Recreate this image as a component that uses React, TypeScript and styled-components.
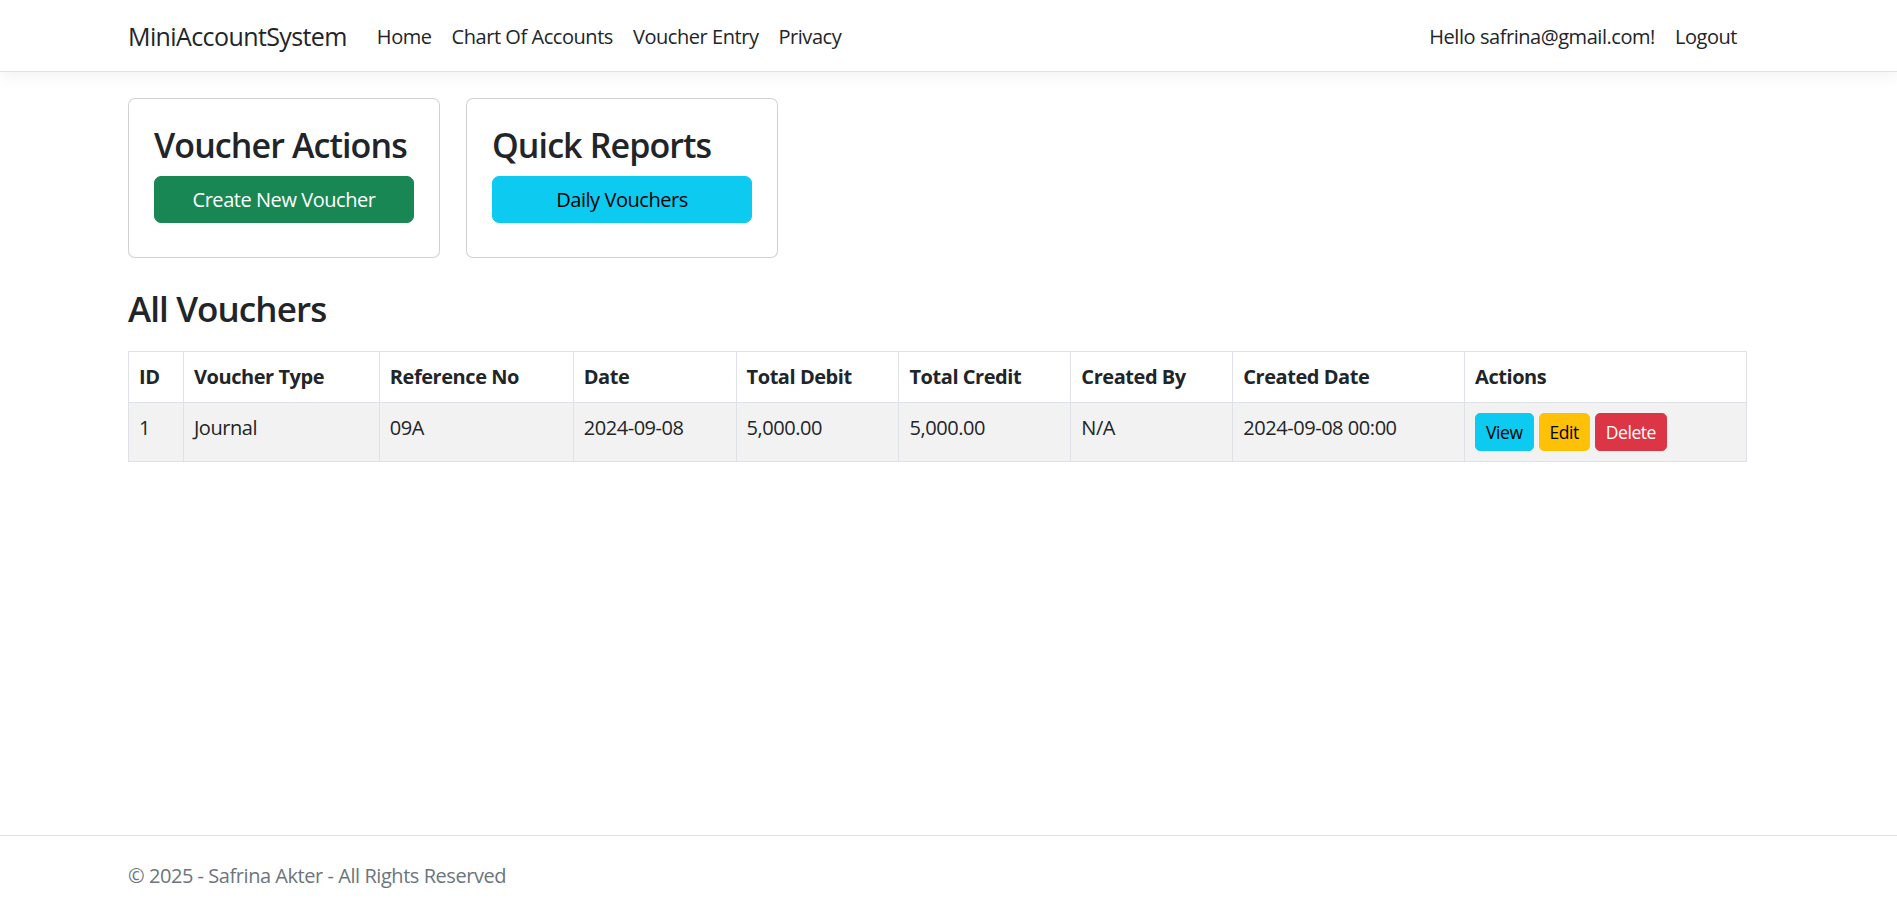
import React from "react";
import styled, { createGlobalStyle } from "styled-components";

const GlobalStyle = createGlobalStyle`
  html, body {
    margin: 0;
    padding: 0;
  }
  body {
    font-family: "Segoe UI", "Open Sans", "Noto Sans", sans-serif;
    font-size: 20px;
    line-height: 1.5;
    letter-spacing: -0.45px;
    color: #212529;
    background: #ffffff;
  }
  *, *::before, *::after { box-sizing: border-box; }
`;

const Page = styled.div`
  display: flex;
  flex-direction: column;
  min-height: 100vh;
`;

const NavBar = styled.header`
  background: #fff;
  border-bottom: 1px solid #dee2e6;
  box-shadow: 0 5px 15px rgba(0, 0, 0, 0.05);
`;

const Container = styled.div`
  padding: 0 150px 0 128px;
`;

const NavInner = styled(Container)`
  display: flex;
  align-items: center;
  height: 71px;
  padding-top: 2px;
`;

const Brand = styled.a`
  font-size: 25px;
  letter-spacing: -0.6px;
  color: #212529;
  text-decoration: none;
  margin-right: 20px;
  white-space: nowrap;
`;

const NavList = styled.nav`
  display: flex;
  align-items: center;
  flex: 1;
`;

const NavLink = styled.a`
  padding: 10px;
  color: #212529;
  text-decoration: none;
  white-space: nowrap;
`;

const UserArea = styled.div`
  display: flex;
  align-items: center;
`;

const LinkButton = styled.button`
  font: inherit;
  letter-spacing: inherit;
  background: none;
  border: 0;
  padding: 10px;
  color: #212529;
  cursor: pointer;
`;

const Main = styled(Container)`
  padding-top: 26px;
`;

const CardRow = styled.div`
  display: flex;
  gap: 26px;
  margin-bottom: 30px;
`;

const Card = styled.section`
  width: 312px;
  border: 1px solid rgba(0, 0, 0, 0.175);
  border-radius: 7px;
  padding: 25px 25px 34px;
  background: #fff;
`;

const CardTitle = styled.h3`
  margin: 0 0 10px;
  font-size: 34px;
  font-weight: 600;
  line-height: 42px;
  letter-spacing: -0.9px;
  white-space: nowrap;
`;

const Button = styled.button<{ $bg: string; $fg: string; $small?: boolean }>`
  font-family: inherit;
  letter-spacing: inherit;
  font-size: ${(p) => (p.$small ? "17.5px" : "20px")};
  line-height: 1.5;
  padding: ${(p) => (p.$small ? "5px 10px" : "7.5px 15px")};
  border: 1px solid ${(p) => p.$bg};
  border-radius: ${(p) => (p.$small ? "5px" : "7px")};
  background: ${(p) => p.$bg};
  color: ${(p) => p.$fg};
  cursor: pointer;
`;

const BlockButton = styled(Button)`
  display: block;
  width: 100%;
`;

const SectionTitle = styled.h2`
  margin: 0 0 21px;
  font-size: 35px;
  font-weight: 600;
  line-height: 42px;
  letter-spacing: -0.9px;
`;

const Table = styled.table`
  width: 100%;
  border-collapse: collapse;
  border: 1px solid #dee2e6;
  vertical-align: top;
`;

const Col = styled.col<{ $w: number }>`
  width: ${(p) => p.$w}px;
`;

const Th = styled.th`
  text-align: left;
  font-weight: 700;
  padding: 10px;
  border: 1px solid #dee2e6;
  white-space: nowrap;
`;

const Row = styled.tr<{ $striped?: boolean }>`
  background: ${(p) => (p.$striped ? "#f2f2f2" : "#fff")};
`;

const Td = styled.td`
  padding: 10px;
  border: 1px solid #dee2e6;
  vertical-align: top;
  white-space: nowrap;
`;

const Actions = styled.div`
  display: flex;
  gap: 5px;
`;

const Footer = styled.footer`
  margin-top: auto;
  border-top: 1px solid #dee2e6;
  height: 71px;
  padding-top: 25px;
  color: #6c757d;
  white-space: nowrap;
`;

const columns = [
  { label: "ID", w: 55 },
  { label: "Voucher Type", w: 196 },
  { label: "Reference No", w: 194 },
  { label: "Date", w: 163 },
  { label: "Total Debit", w: 163 },
  { label: "Total Credit", w: 172 },
  { label: "Created By", w: 162 },
  { label: "Created Date", w: 232 },
  { label: "Actions", w: 282 },
];

const vouchers = [
  {
    id: 1,
    type: "Journal",
    ref: "09A",
    date: "2024-09-08",
    debit: "5,000.00",
    credit: "5,000.00",
    by: "N/A",
    created: "2024-09-08 00:00",
  },
];

export default function App() {
  return (
    <>
      <GlobalStyle />
      <Page>
        <NavBar>
          <NavInner>
            <Brand href="#">MiniAccountSystem</Brand>
            <NavList>
              <NavLink href="#">Home</NavLink>
              <NavLink href="#">Chart Of Accounts</NavLink>
              <NavLink href="#">Voucher Entry</NavLink>
              <NavLink href="#">Privacy</NavLink>
            </NavList>
            <UserArea>
              <NavLink href="#">Hello safrina@gmail.com!</NavLink>
              <LinkButton type="button">Logout</LinkButton>
            </UserArea>
          </NavInner>
        </NavBar>
        <Main as="main">
          <CardRow>
            <Card>
              <CardTitle>Voucher Actions</CardTitle>
              <BlockButton $bg="#198754" $fg="#fff">Create New Voucher</BlockButton>
            </Card>
            <Card>
              <CardTitle>Quick Reports</CardTitle>
              <BlockButton $bg="#0dcaf0" $fg="#000">Daily Vouchers</BlockButton>
            </Card>
          </CardRow>
          <SectionTitle>All Vouchers</SectionTitle>
          <Table>
            <colgroup>
              {columns.map((c) => (
                <Col key={c.label} $w={c.w} />
              ))}
            </colgroup>
            <thead>
              <tr>
                {columns.map((c) => (
                  <Th key={c.label}>{c.label}</Th>
                ))}
              </tr>
            </thead>
            <tbody>
              {vouchers.map((v, i) => (
                <Row key={v.id} $striped={i % 2 === 0}>
                  <Td>{v.id}</Td>
                  <Td>{v.type}</Td>
                  <Td>{v.ref}</Td>
                  <Td>{v.date}</Td>
                  <Td>{v.debit}</Td>
                  <Td>{v.credit}</Td>
                  <Td>{v.by}</Td>
                  <Td>{v.created}</Td>
                  <Td>
                    <Actions>
                      <Button $small $bg="#0dcaf0" $fg="#000">View</Button>
                      <Button $small $bg="#ffc107" $fg="#000">Edit</Button>
                      <Button $small $bg="#dc3545" $fg="#fff">Delete</Button>
                    </Actions>
                  </Td>
                </Row>
              ))}
            </tbody>
          </Table>
        </Main>
        <Footer>
          <Container>© 2025 - Safrina Akter - All Rights Reserved</Container>
        </Footer>
      </Page>
    </>
  );
}
